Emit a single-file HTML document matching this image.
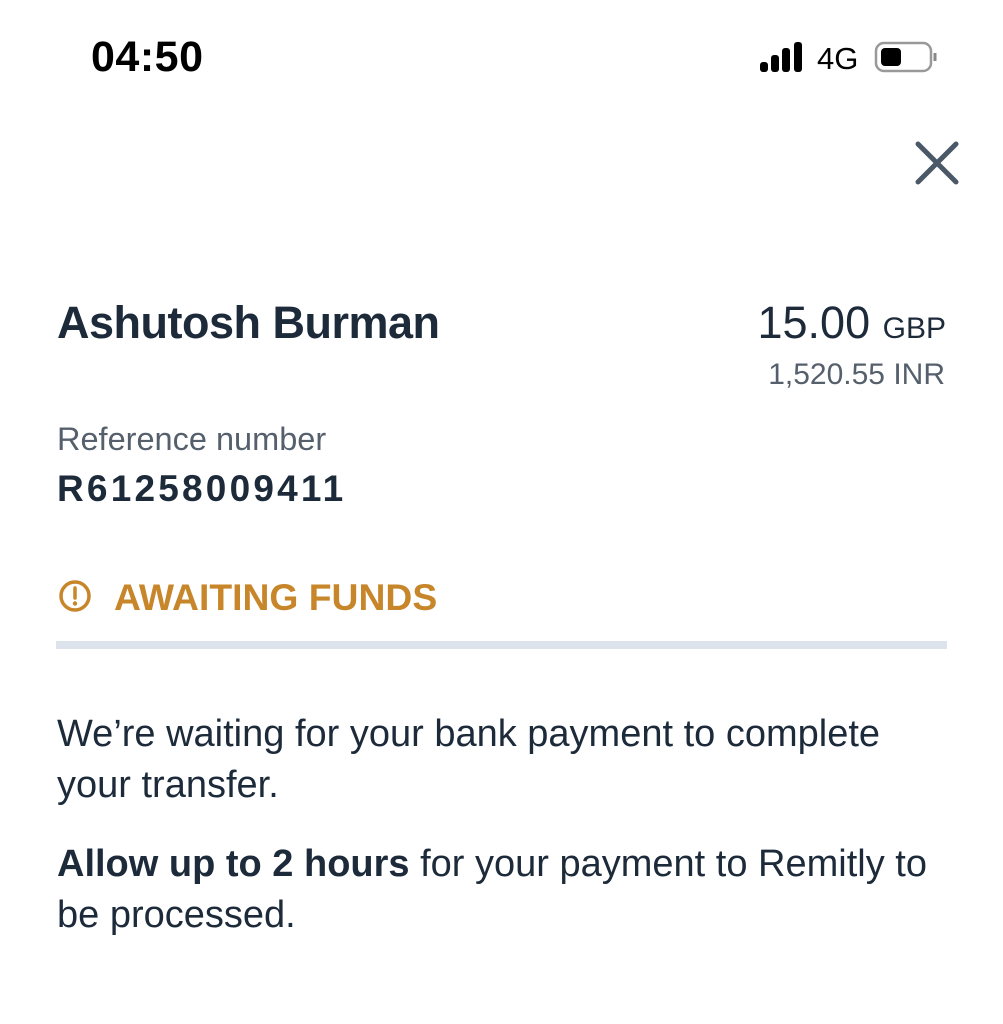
<!DOCTYPE html>
<html><head><style>
body{margin:0;width:1003px;height:1024px;background:#fff;font-family:"Liberation Sans",sans-serif;color:#1c2a3a;position:relative;overflow:hidden}
.a{position:absolute;white-space:nowrap}
</style></head><body>
<div class="a" style="left:91px;top:33px;font-size:43px;font-weight:bold;color:#000;letter-spacing:0.5px">04:50</div>
<svg class="a" style="left:758px;top:40px" width="50" height="32"><rect x="2" y="22" width="8" height="10" rx="3"/><rect x="13" y="15" width="8" height="17" rx="3"/><rect x="24" y="8" width="8" height="24" rx="3"/><rect x="36" y="2" width="8" height="30" rx="3"/></svg>
<div class="a" style="left:817px;top:41px;font-size:31px;color:#000">4G</div>
<svg class="a" style="left:874px;top:40px" width="70" height="34"><rect x="2" y="3" width="55" height="28" rx="8" fill="none" stroke="#999" stroke-width="2.5"/><rect x="7" y="8" width="20" height="18" rx="4" fill="#000"/><path d="M61 13v8" stroke="#888" stroke-width="3"/></svg>
<svg class="a" style="left:914px;top:140px" width="46" height="46"><path d="M4 4L42 42M42 4L4 42" stroke="#4a5868" stroke-width="5" stroke-linecap="round"/></svg>
<div class="a" style="left:57px;top:297px;font-size:45px;font-weight:bold;letter-spacing:-0.5px">Ashutosh Burman</div>
<div class="a" style="right:57px;top:297px;font-size:45px"><span>15.00</span> <span style="font-size:30px">GBP</span></div>
<div class="a" style="right:58px;top:358px;font-size:30px;color:#55606c">1,520.55 INR</div>
<div class="a" style="left:57px;top:421px;font-size:32.5px;color:#55606c">Reference number</div>
<div class="a" style="left:57px;top:468px;font-size:37px;font-weight:bold;letter-spacing:3.2px">R61258009411</div>
<svg class="a" style="left:58px;top:579px" width="34" height="34"><circle cx="17" cy="17" r="14" fill="none" stroke="#c8862a" stroke-width="3.5"/><path d="M17 9v10" stroke="#c8862a" stroke-width="3.5" stroke-linecap="round"/><circle cx="17" cy="24.5" r="2.2" fill="#c8862a"/></svg>
<div class="a" style="left:114px;top:576px;font-size:37.3px;font-weight:bold;color:#c8862a">AWAITING FUNDS</div>
<div class="a" style="left:56px;top:641px;width:891px;height:8px;background:#dce3ec"></div>
<div class="a" style="left:57px;top:709px;font-size:38px;line-height:51px;white-space:normal;width:880px">We’re waiting for your bank payment to complete your transfer.</div>
<div class="a" style="left:57px;top:839px;font-size:38px;line-height:51px;white-space:normal;width:880px"><b>Allow up to 2 hours</b> for your payment to Remitly to be processed.</div>
</body></html>
